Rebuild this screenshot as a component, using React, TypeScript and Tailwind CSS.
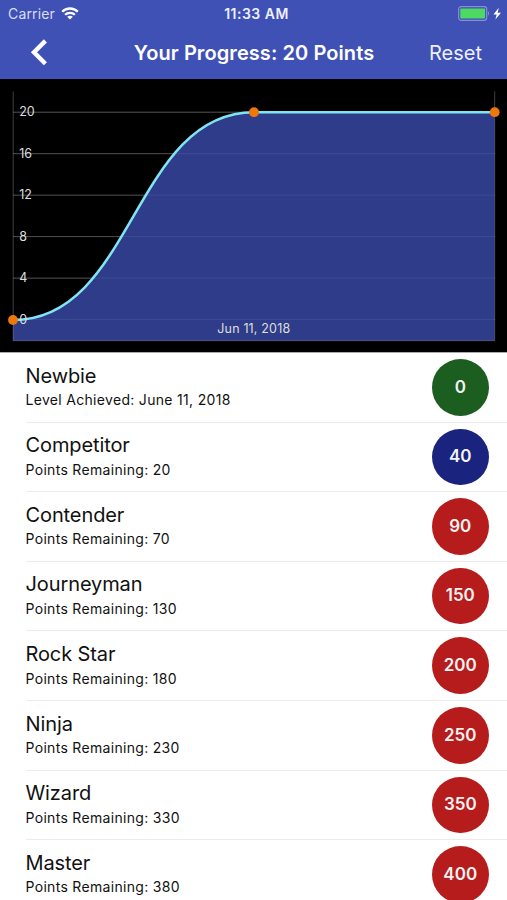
const levels = [
  { name: 'Newbie', note: 'Level Achieved: June 11, 2018', points: 0, color: 'bg-[#1b5e20]' },
  { name: 'Competitor', note: 'Points Remaining: 20', points: 40, color: 'bg-[#1a237e]' },
  { name: 'Contender', note: 'Points Remaining: 70', points: 90, color: 'bg-[#b71c1c]' },
  { name: 'Journeyman', note: 'Points Remaining: 130', points: 150, color: 'bg-[#b71c1c]' },
  { name: 'Rock Star', note: 'Points Remaining: 180', points: 200, color: 'bg-[#b71c1c]' },
  { name: 'Ninja', note: 'Points Remaining: 230', points: 250, color: 'bg-[#b71c1c]' },
  { name: 'Wizard', note: 'Points Remaining: 330', points: 350, color: 'bg-[#b71c1c]' },
  { name: 'Master', note: 'Points Remaining: 380', points: 400, color: 'bg-[#b71c1c]' },
];

const ticks = [20, 16, 12, 8, 4, 0];

function StatusBar() {
  return (
    <div className="flex h-[27px] items-center justify-between pl-2 pr-[5px] text-[14px]">
      <div className="flex w-[118px] items-center gap-[6px]">
        <span className="tracking-[0.15px] text-[#d9def8]">Carrier</span>
        <svg width="18" height="13" viewBox="0 0 18 13" fill="none" stroke="white" strokeWidth="2.3">
          <path d="M1.2 4.7C5.5 .4 12.5 .4 16.8 4.7" />
          <path d="M4.1 7.8C6.8 5.1 11.2 5.1 13.9 7.8" />
          <path d="M6.2 9.7C7.8 8.3 10.2 8.3 11.8 9.7L9 12.5Z" fill="white" stroke="none" />
        </svg>
      </div>
      <span className="font-semibold tracking-[0.5px] text-[#edf0ff]">11:33 AM</span>
      <div className="flex w-[115px] items-center justify-end">
        <svg width="44" height="16" viewBox="0 0 44 16">
          <rect x="0.7" y="0.7" width="28" height="13.6" rx="2.5" fill="none" stroke="#8791d0" strokeWidth="1.2" />
          <rect x="2.3" y="2.6" width="24.8" height="9.8" rx="0.8" fill="#4cd964" />
          <path d="M30 5.3Q32.2 7.5 30 9.8Z" fill="#8791d0" />
          <path d="M40.8 1.8L35.4 8.6H38.6L37.4 13.6L43 6.7H39.7Z" fill="white" />
        </svg>
      </div>
    </div>
  );
}

function Chart() {
  return (
    <svg className="block shrink-0" width="507" height="273" viewBox="0 79 507 273">
      <rect y="79" width="507" height="273" fill="black" />
      <g stroke="#444444" strokeWidth="1">
        {ticks.map((t) => (
          <path key={t} d={`M13 ${319.6 - t * 10.37}H495`} />
        ))}
      </g>
      <path d="M13 320C133.5 320 133.5 112.2 254 112.2H494.6V340.7H13Z" fill="#2f3c89" />
      <g stroke="#ffffff" strokeOpacity="0.08" strokeWidth="1">
        {ticks.map((t) => (
          <path key={t} d={`M13 ${319.6 - t * 10.37}H495`} />
        ))}
      </g>
      <path d="M13.2 91.5V340.7H494.7V91.5" fill="none" stroke="#8a8a9a" strokeOpacity="0.45" />
      <path d="M13 320C133.5 320 133.5 112.2 254 112.2H494.6" fill="none" stroke="#80e5f3" strokeWidth="2.5" />
      <g fill="#f07809">
        <circle cx="13" cy="320" r="4.9" />
        <circle cx="254" cy="112.2" r="4.9" />
        <circle cx="494.7" cy="112.2" r="4.9" />
      </g>
      <g fill="#dedede" fontSize="12.5">
        {ticks.map((t) => (
          <text key={t} x="19.3" y={323.7 - t * 10.37} className="tracking-[-0.2px]">{t}</text>
        ))}
        <text x="253.8" y="333" textAnchor="middle" className="tracking-[0.16px]">Jun 11, 2018</text>
      </g>
    </svg>
  );
}

export default function App() {
  return (
    <div className="flex h-[900px] w-[507px] flex-col overflow-hidden bg-white font-['Inter',sans-serif]">
      <header className="h-[79px] shrink-0 bg-[#3f51b5] text-white">
        <StatusBar />
        <div className="flex h-[51px] items-center justify-between pl-[30px] pr-[25px] text-[20px]">
          <div className="w-[49px]">
            <svg width="18" height="28" viewBox="0 0 18 28" fill="none" stroke="white" strokeWidth="4.4">
              <path d="M15.4 1.9L4 13.3L15.4 24.7" />
            </svg>
          </div>
          <h1 className="whitespace-nowrap font-semibold tracking-[0.08px]">Your Progress: 20 Points</h1>
          <button className="text-right text-[#eef0ff]">Reset</button>
        </div>
      </header>
      <Chart />
      <ul className="border-t border-[#aaa]">
        {levels.map((level) => (
          <li key={level.name} className="ml-[25.5px] flex h-[69.6px] items-center justify-between border-b border-[#ececec] pr-[18.5px]">
            <div className="-mt-[0.6px] text-[#111]">
              <div className="text-[20px] leading-[25px] tracking-[-0.1px]">{level.name}</div>
              <div className="mt-[1.6px] text-[14px] leading-[20px] tracking-[0.31px]">{level.note}</div>
            </div>
            <div className={`flex size-[56.5px] items-center justify-center rounded-full text-[17px] font-semibold text-[#f3f3f3] ${level.color}`}>
              {level.points}
            </div>
          </li>
        ))}
      </ul>
    </div>
  );
}
